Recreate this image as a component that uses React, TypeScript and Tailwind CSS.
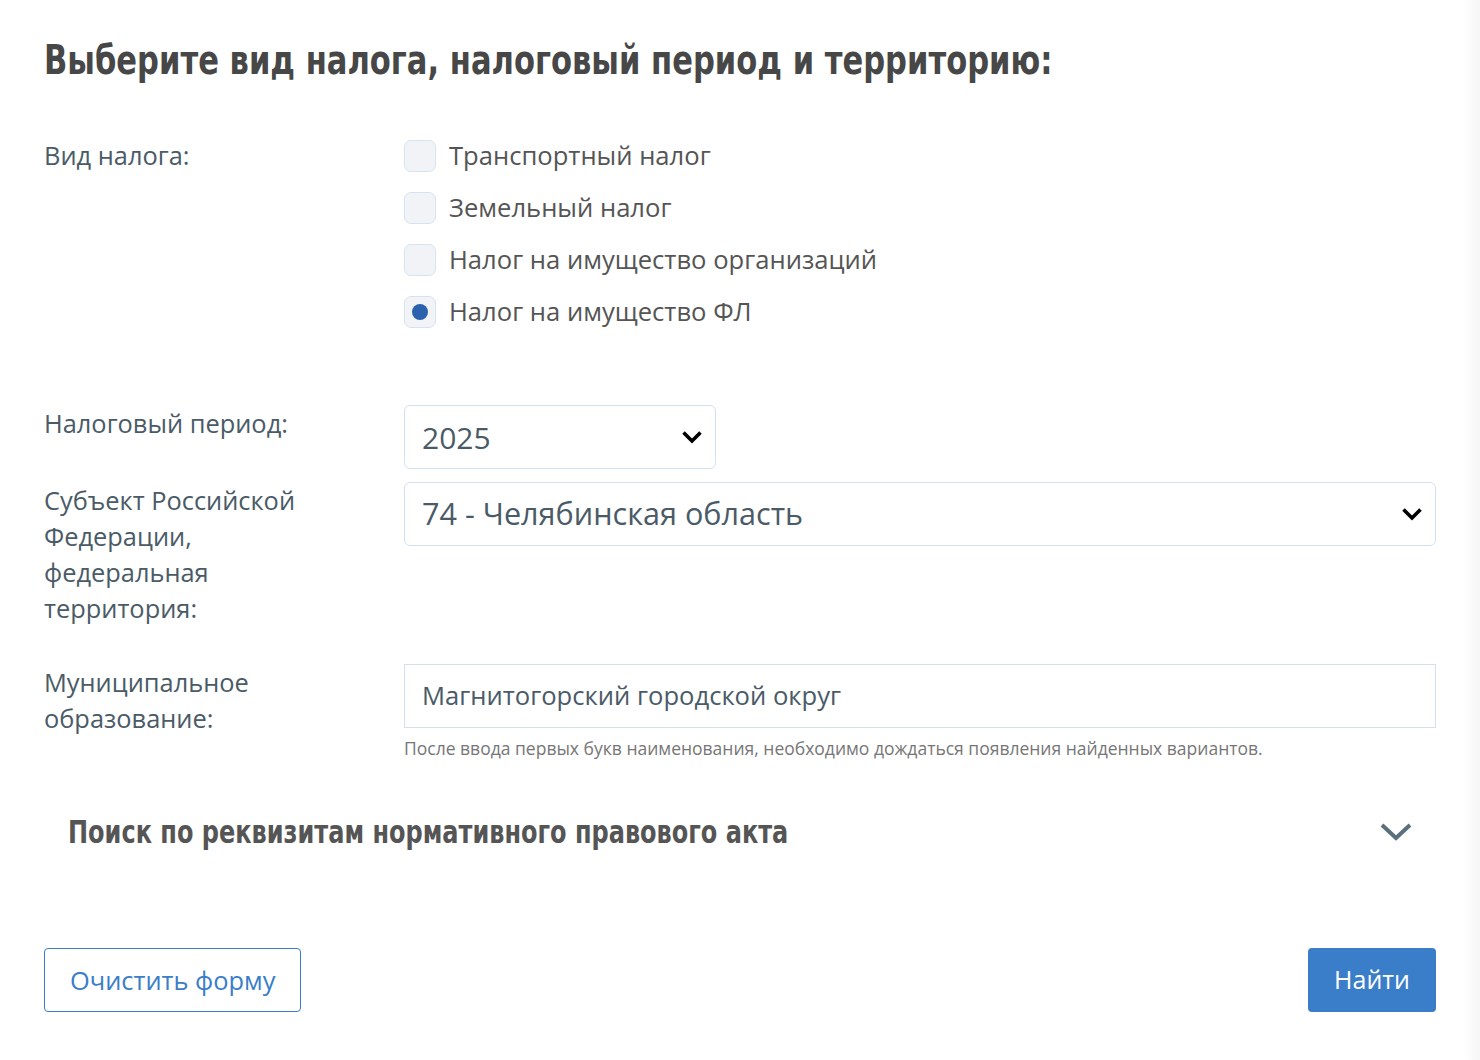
import React from "react";

const body = { fontFamily: '"Open Sans", "Noto Sans", sans-serif' };
const cond = { fontFamily: '"DejaVu Sans Condensed", "Roboto", sans-serif' };

function Chevron({ className }: { className?: string }) {
  return (
    <svg className={className} width="22" height="14" viewBox="0 0 22 14" fill="none">
      <path d="M2.5 2.5 L11 11 L19.5 2.5" stroke="currentColor" strokeWidth="3.6" strokeLinecap="butt" strokeLinejoin="miter" />
    </svg>
  );
}

function Radio({ label, checked }: { label: string; checked?: boolean }) {
  return (
    <label className="flex items-center h-[52px] cursor-pointer">
      <span className="w-[32px] h-[32px] rounded-[7px] bg-[#f1f3f6] border border-[#d6e3f2] flex items-center justify-center shrink-0">
        {checked && <span className="w-[16px] h-[16px] rounded-full bg-[#2a62ad]" />}
      </span>
      <span className="ml-[13px] text-[25.6px] leading-[32px] text-[#555555] whitespace-nowrap">{label}</span>
    </label>
  );
}

export default function App() {
  return (
    <div className="w-[1480px] h-[1060px] bg-white overflow-hidden relative" style={body}>
      <div className="absolute top-0 right-0 w-[16px] h-full bg-gradient-to-r from-transparent to-[#f6f6f6] pointer-events-none" />
      <div className="px-[44px] pt-[36px]">
        <h1
          className="text-[40px] leading-[48px] font-bold text-[#474747] whitespace-nowrap origin-left scale-x-[0.85]"
          style={cond}
        >
          Выберите вид налога, налоговый период и территорию:
        </h1>

        <div className="flex mt-[46px]">
          <div className="w-[360px] shrink-0 pt-[7px] text-[25.4px] leading-[36px] text-[#4a5b67]">Вид налога:</div>
          <div className="flex flex-col">
            <Radio label="Транспортный налог" />
            <Radio label="Земельный налог" />
            <Radio label="Налог на имущество организаций" />
            <Radio label="Налог на имущество ФЛ" checked />
          </div>
        </div>

        <div className="flex mt-[67px]">
          <div className="w-[360px] shrink-0 text-[25.4px] leading-[36px] text-[#4a5b67]">Налоговый период:</div>
          <div className="w-[312px] h-[64px] border border-[#d3e0ef] rounded-[6px] flex items-center justify-between pl-[17px] pr-[12px]">
            <span className="text-[30px] text-[#4a5b67]">2025</span>
            <Chevron className="text-black" />
          </div>
        </div>

        <div className="flex mt-[13px]">
          <div className="w-[360px] shrink-0 text-[25.4px] leading-[36px] text-[#4a5b67] pr-[70px]">
            Субъект Российской Федерации, федеральная территория:
          </div>
          <div className="flex-1 h-[64px] border border-[#d3e0ef] rounded-[6px] flex items-center justify-between pl-[17px] pr-[12px]">
            <span className="text-[30.6px] text-[#4a5b67]">74 - Челябинская область</span>
            <Chevron className="text-black" />
          </div>
        </div>

        <div className="flex mt-[38px]">
          <div className="w-[360px] shrink-0 text-[25.4px] leading-[36px] text-[#4a5b67] pr-[70px]">
            Муниципальное образование:
          </div>
          <div className="flex-1">
            <div className="h-[64px] border border-[#d3e0ef] flex items-center pl-[17px]">
              <span className="text-[25.6px] text-[#4a5b67]">Магнитогорский городской округ</span>
            </div>
            <div className="mt-[10px] text-[17.5px] leading-[20px] text-[#767676] whitespace-nowrap">
              После ввода первых букв наименования, необходимо дождаться появления найденных вариантов.
            </div>
          </div>
        </div>

        <div className="mt-[54px] h-[40px] pl-[24px] pr-[24px] flex items-center justify-between">
          <span
            className="text-[32px] leading-[40px] font-bold text-[#555555] whitespace-nowrap origin-left scale-x-[0.834]"
            style={cond}
          >
            Поиск по реквизитам нормативного правового акта
          </span>
          <svg width="32" height="20" viewBox="0 0 32 20" fill="none" className="text-[#5b707d]">
            <path d="M2 3 L16 16 L30 3" stroke="currentColor" strokeWidth="4" />
          </svg>
        </div>

        <div className="mt-[96px] flex justify-between">
          <button className="h-[64px] px-[25px] border border-[#3a7dc9] rounded-[4px] text-[25.4px] text-[#3a7dc9] bg-white">
            Очистить форму
          </button>
          <button className="h-[64px] px-[26px] rounded-[4px] text-[25px] text-white bg-[#3a7dc9]">
            Найти
          </button>
        </div>
      </div>
    </div>
  );
}
